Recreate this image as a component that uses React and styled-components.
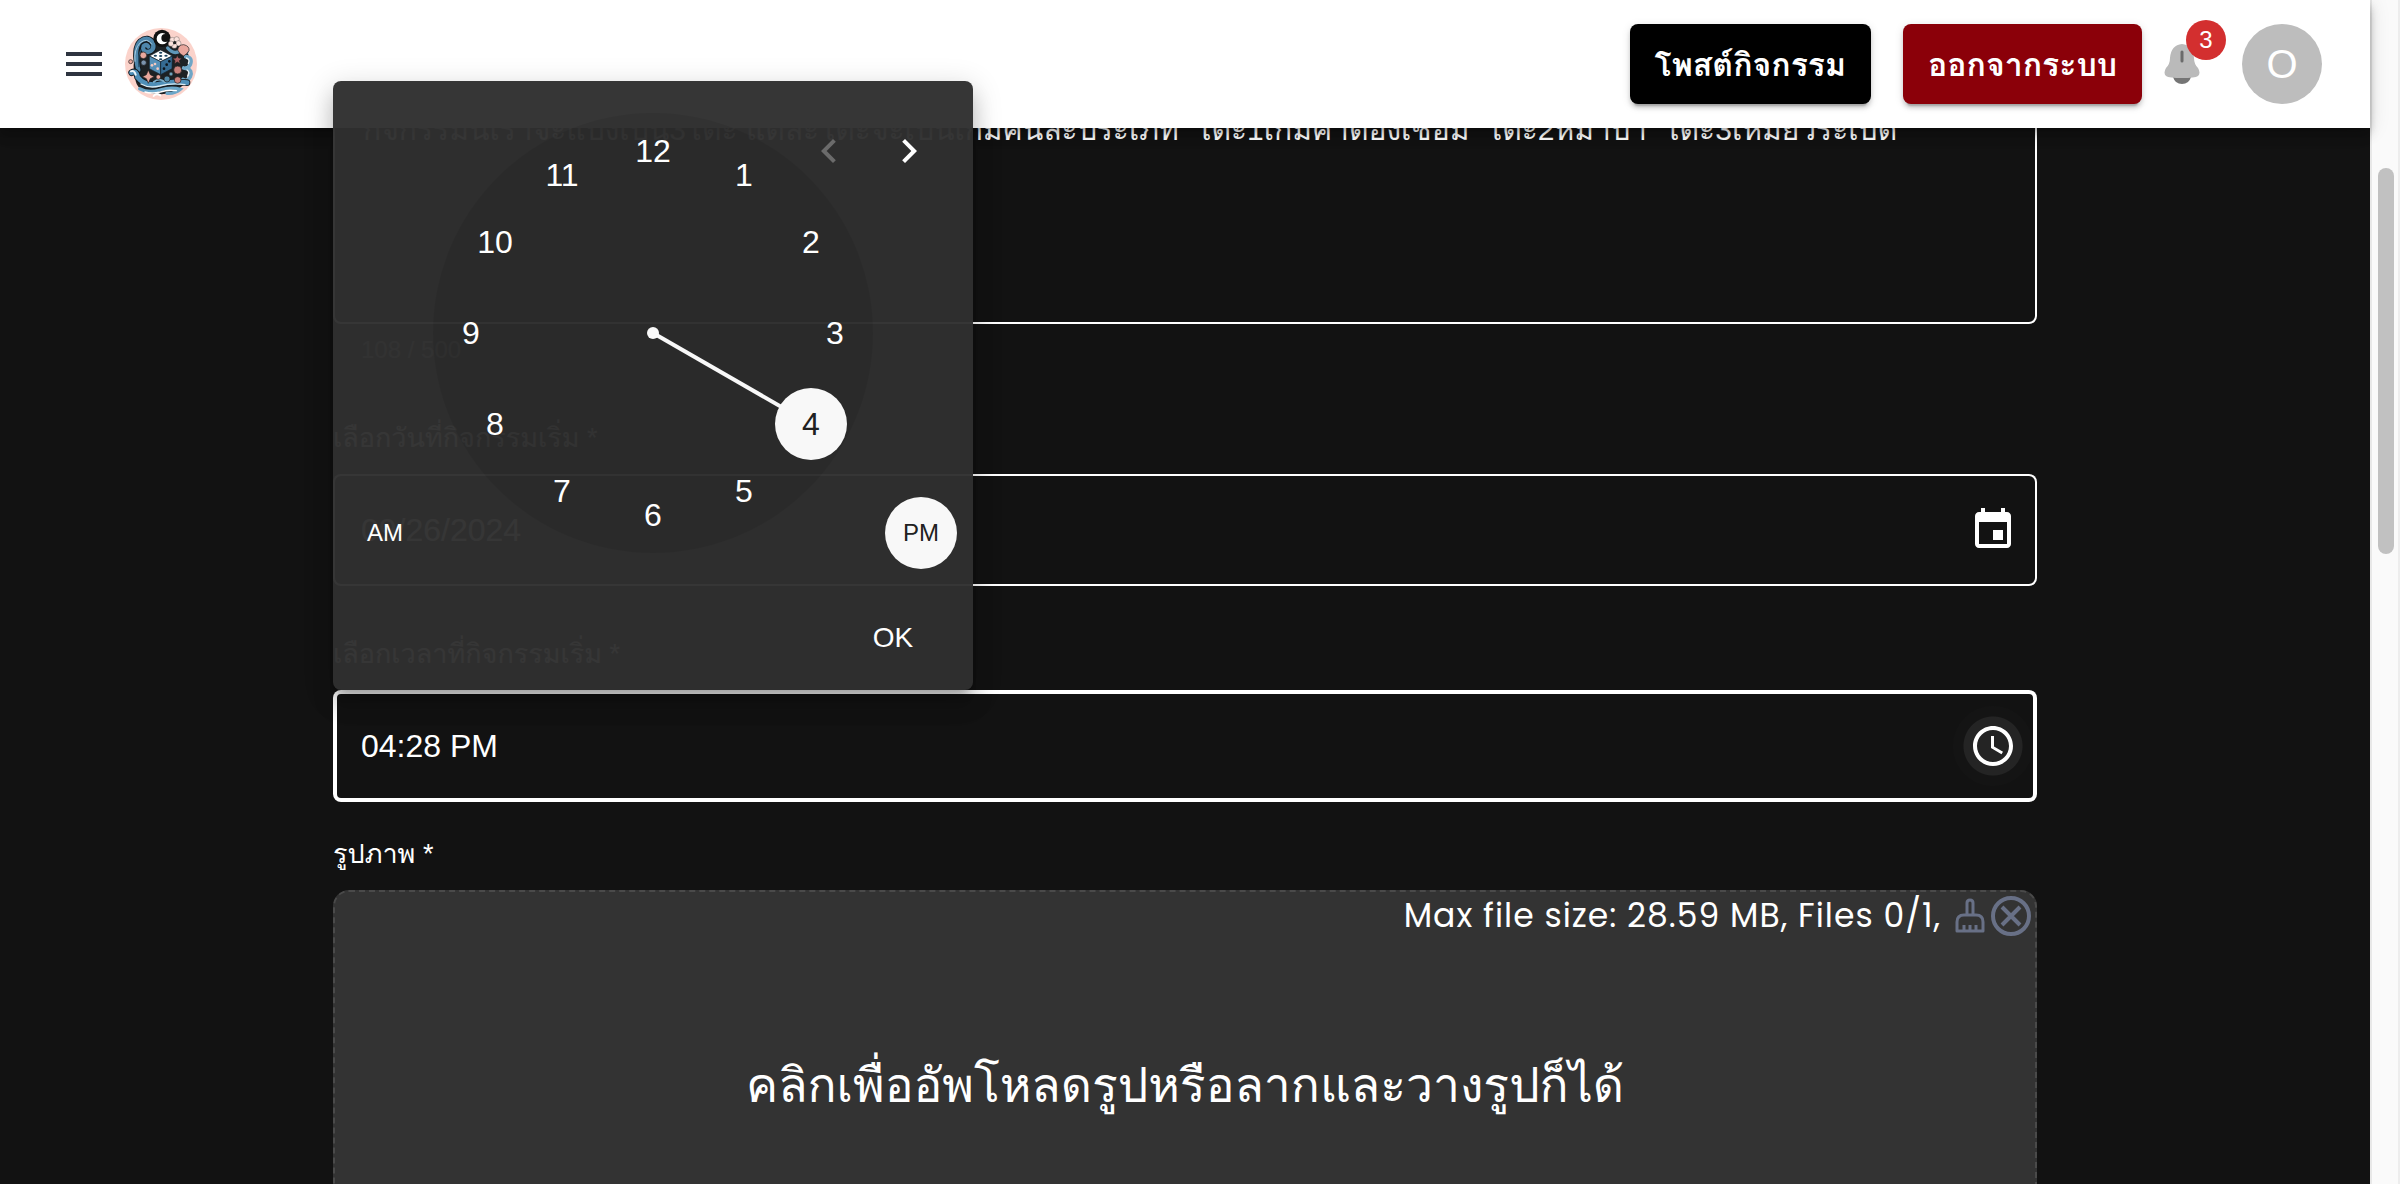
import React from "react";
import styled, { createGlobalStyle, css } from "styled-components";

const GlobalStyle = createGlobalStyle`
  *, *::before, *::after { box-sizing: border-box; }
  body {
    margin: 0;
    background: #121212;
    color: #fff;
    font-family: "Liberation Sans", Arial, Loma, sans-serif;
  }
  button, input, textarea { font: inherit; color: inherit; }
`;

const Screen = styled.div`
  display: flex;
  height: 100vh;
  overflow: hidden;
`;

const Page = styled.div`
  flex: 1;
  min-width: 0;
`;

const AppBar = styled.header`
  position: relative;
  z-index: 10;
  display: flex;
  align-items: center;
  height: 128px;
  padding: 0 48px 0 36px;
  background: #fff;
  box-shadow: 0 4px 8px -2px rgba(0, 0, 0, 0.2), 0 8px 10px rgba(0, 0, 0, 0.14),
    0 2px 20px rgba(0, 0, 0, 0.12);
`;

const IconButton = styled.button`
  display: inline-flex;
  align-items: center;
  justify-content: center;
  flex: none;
  padding: ${(p) => (p.$roomy ? 24 : 16)}px;
  border: 0;
  border-radius: 50%;
  background: none;
  color: ${(p) => p.$color || "#fff"};
  ${(p) =>
    p.$active &&
    css`
      background: radial-gradient(circle, #242424 0 29px, #141414 30px 40px);
    `}
`;

const LogoLink = styled.a`
  display: block;
  width: 72px;
  height: 72px;
  margin-left: -7px;
`;

const Actions = styled.div`
  display: flex;
  align-items: center;
  margin-left: auto;
`;

const BarButton = styled.button`
  height: 80px;
  padding: 0 25px;
  margin-right: ${(p) => p.$gap}px;
  border: 0;
  border-radius: 8px;
  background: ${(p) => p.$bg};
  font-size: 32px;
  font-weight: 700;
  white-space: nowrap;
  box-shadow: 0 6px 2px -4px rgba(0, 0, 0, 0.2), 0 4px 4px rgba(0, 0, 0, 0.14),
    0 2px 10px rgba(0, 0, 0, 0.12);
`;

const BellButton = styled.button`
  position: relative;
  display: flex;
  padding: 0;
  margin-right: 42px;
  border: 0;
  background: none;
`;

const Badge = styled.span`
  position: absolute;
  top: -24px;
  right: -26px;
  width: 40px;
  height: 40px;
  border-radius: 50%;
  background: #d32f2f;
  font-size: 24px;
  line-height: 40px;
  text-align: center;
`;

const Avatar = styled.div`
  display: flex;
  align-items: center;
  justify-content: center;
  width: 80px;
  height: 80px;
  border-radius: 50%;
  background: #bdbdbd;
  font-size: 40px;
`;

const Form = styled.form`
  display: flex;
  flex-direction: column;
  max-width: 1704px;
  margin: -56px auto 0;
`;

const Field = styled.div`
  position: relative;
  display: flex;
  flex-direction: column;
  margin-bottom: ${(p) => (p.$tight ? 32 : 48)}px;
`;

const Label = styled.label`
  margin-bottom: 16px;
  font-size: 27px;
  line-height: 40px;
`;

const Description = styled.textarea`
  height: 252px;
  padding: 33px 28px;
  border: 2px solid #fff;
  border-radius: 8px;
  background: none;
  font-size: 30px;
  line-height: 46px;
  resize: none;
  outline: 0;
  overflow: hidden;
`;

const HelperText = styled.p`
  margin: 6px 28px 0;
  color: rgba(255, 255, 255, 0.5);
  font-size: 24px;
  line-height: 40px;
`;

const InputBox = styled.div`
  position: relative;
  display: flex;
  align-items: center;
  height: 112px;
  padding: 0 4px 0 28px;
  border-radius: 8px;
  box-shadow: inset 0 0 0 ${(p) => (p.$focused ? 4 : 2)}px #fff;
`;

const TextInput = styled.input`
  flex: 1;
  min-width: 0;
  padding: 0;
  border: 0;
  outline: 0;
  background: none;
  font-size: 32px;
  line-height: 46px;
`;

const Popup = styled.div`
  position: absolute;
  z-index: 20;
  bottom: 112px;
  left: 0;
  display: flex;
  flex-direction: column;
  width: 640px;
  padding: 32px 16px 16px;
  border-radius: 8px;
  background: rgba(47, 47, 47, 0.97);
  box-shadow: 0 10px 10px -6px rgba(0, 0, 0, 0.2),
    0 16px 20px 2px rgba(0, 0, 0, 0.14), 0 6px 28px 4px rgba(0, 0, 0, 0.12);
`;

const Arrows = styled.div`
  position: absolute;
  z-index: 1;
  top: 30px;
  right: 24px;
  display: flex;
`;

const Dial = styled.div`
  position: relative;
  align-self: center;
  width: 440px;
  height: 440px;
  border-radius: 50%;
  background: rgba(0, 0, 0, 0.07);
`;

const Hand = styled.svg`
  display: block;
`;

const Hour = styled.span`
  position: absolute;
  top: 184px;
  left: 184px;
  width: 72px;
  height: 72px;
  border-radius: 50%;
  color: ${(p) => (p.$selected ? "#212121" : "#fff")};
  font-size: 32px;
  line-height: 72px;
  text-align: center;
`;

const MeridiemRow = styled.div`
  position: relative;
  display: flex;
  justify-content: space-between;
  margin-top: -56px;
`;

const Meridiem = styled.button`
  width: 72px;
  height: 72px;
  padding: 0;
  border: 0;
  border-radius: 50%;
  background: ${(p) => (p.$selected ? "#f8f8f8" : "transparent")};
  color: ${(p) => (p.$selected ? "#212121" : "#fff")};
  font-size: 24px;
`;

const OkButton = styled.button`
  align-self: flex-end;
  width: 128px;
  height: 72px;
  margin-top: 33px;
  padding: 0;
  border: 0;
  background: none;
  font-size: 28px;
`;

const DropZone = styled.div`
  display: flex;
  flex-direction: column;
  height: 400px;
  border: 2px dashed #4a4a4a;
  border-radius: 16px;
  background: #333;
`;

const DropHeader = styled.div`
  display: flex;
  align-items: center;
  justify-content: flex-end;
  height: 48px;
  padding-right: 4px;
  font-family: Poppins, "Noto Sans", sans-serif;
  font-size: 33px;
  font-weight: 400;
  letter-spacing: 1px;
`;

const DropIcons = styled.span`
  display: flex;
  align-items: center;
  gap: 6px;
  margin-left: 14px;
`;

const DropButton = styled.button`
  display: flex;
  padding: 0;
  border: 0;
  background: none;
`;

const DropText = styled.p`
  margin: 110px 0 0;
  font-size: 48px;
  line-height: 72px;
  text-align: center;
`;

const ScrollTrack = styled.div`
  flex: none;
  width: 30px;
  padding: 168px 4px 0 6px;
  border-left: 2px solid #e8e8e8;
  border-right: 2px solid #ededed;
  background: #fafafa;
`;

const ScrollThumb = styled.div`
  width: 16px;
  height: 386px;
  border-radius: 8px;
  background: #c1c1c1;
`;

function Icon({ d, size = 48 }) {
  return (
    <svg width={size} height={size} viewBox="0 0 24 24" fill="currentColor" aria-hidden="true">
      <path d={d} />
    </svg>
  );
}

const icons = {
  menu: "M3 18h18v-2H3v2zm0-5h18v-2H3v2zm0-7v2h18V6H3z",
  left: "M15.41 16.59L10.83 12l4.58-4.59L14 6l-6 6 6 6 1.41-1.41z",
  right: "M8.59 16.59L13.17 12 8.59 7.41 10 6l6 6-6 6-1.41-1.41z",
  event:
    "M17 12h-5v5h5v-5zM16 1v2H8V1H6v2H5c-1.11 0-1.99.9-1.99 2L3 19c0 1.1.89 2 2 2h14c1.1 0 2-.9 2-2V5c0-1.1-.9-2-2-2h-1V1h-2zm3 18H5V8h14v11z",
  clock:
    "M11.99 2C6.47 2 2 6.48 2 12s4.47 10 9.99 10C17.52 22 22 17.52 22 12S17.52 2 11.99 2zM12 20c-4.42 0-8-3.58-8-8s3.58-8 8-8 8 3.58 8 8-3.58 8-8 8zM12.5 7H11v6l5.25 3.15.75-1.23-4.5-2.67z",
};

function Logo() {
  return (
    <svg width="72" height="72" viewBox="0 0 216 216" aria-hidden="true">
      <circle cx="108" cy="108" r="108" fill="#fbd3cb" />
      <path
        d="M88 44 Q60 30 44 46 Q24 68 28 100 Q22 120 32 140 Q28 160 40 176 Q60 196 100 198 Q144 202 174 172 Q194 146 188 112 Q200 84 180 64 Q164 46 140 48 Q118 50 88 44Z"
        fill="#1d2124"
      />
      <g fill="none" strokeLinecap="round">
        <path d="M40 126 Q24 62 46 40 Q70 22 84 46 Q90 68 68 72 Q50 70 56 54 Q64 46 70 56" stroke="#11171c" strokeWidth="18" />
        <path d="M40 126 Q24 62 46 40 Q70 22 84 46 Q90 68 68 72 Q50 70 56 54 Q64 46 70 56" stroke="#4e86ab" strokeWidth="13" />
        <path d="M30 100 Q26 64 46 44 Q66 28 80 48" stroke="#a9cbdf" strokeWidth="3" />
        <path d="M42 116 Q38 80 48 66" stroke="#234d6c" strokeWidth="4" />
        <path d="M128 60 Q146 82 166 68 Q180 56 186 72" stroke="#5f97b9" strokeWidth="10" />
        <path d="M182 86 Q204 88 196 110 Q188 124 176 120 M184 120 Q204 126 196 146 Q188 162 174 154" stroke="#6fa6c6" strokeWidth="11" />
        <path d="M184 90 Q196 94 190 106 M186 126 Q196 132 188 144" stroke="#e9f3f8" strokeWidth="4" />
        <path d="M20 134 Q34 126 38 148 Q58 174 96 170 Q136 158 186 164" stroke="#11171c" strokeWidth="20" />
        <path d="M20 134 Q34 126 38 148 Q58 174 96 170 Q136 158 186 164" stroke="#4f8fb8" strokeWidth="15" />
        <path d="M18 130 Q28 126 32 140" stroke="#eef6fa" strokeWidth="6" />
        <path d="M48 168 Q72 182 104 174 Q140 164 180 170" stroke="#dcecf4" strokeWidth="4" />
        <path d="M44 182 Q70 196 104 186 Q140 176 166 184 Q150 198 126 196" stroke="#6ba6c8" strokeWidth="10" />
        <path d="M60 192 Q80 198 106 192 Q130 184 154 188" stroke="#fff" strokeWidth="4" />
        <path d="M86 204 Q94 194 106 202" stroke="#fff" strokeWidth="6" />
        <path d="M86 162 Q102 148 120 162" stroke="#7fb1cc" strokeWidth="5" />
      </g>
      <circle cx="111" cy="31" r="26" fill="#111" />
      <circle cx="112" cy="32" r="17" fill="#fff" />
      <circle cx="121" cy="30" r="12" fill="#111" />
      <g fill="#e9a79d" stroke="#1c1c1e" strokeWidth="2">
        <path d="M158 66 Q160 50 176 50 Q194 54 192 68 Q186 78 176 84 Q164 80 158 66Z" />
        <circle cx="55" cy="82" r="10" />
        <circle cx="56" cy="104" r="8" fill="#7b93ad" />
        <circle cx="158" cy="126" r="12" fill="#c9827d" />
        <circle cx="158" cy="156" r="10" fill="#c9827d" />
        <circle cx="100" cy="147" r="7" />
        <circle cx="126" cy="153" r="9" fill="#5289a8" />
        <circle cx="138" cy="138" r="6" fill="#6fa3bd" />
        <path d="M70 126 L76 140 L88 146 L76 152 L70 166 L64 152 L52 146 L64 140Z" />
        <path d="M157 82 L161 90 L171 91 L163 98 L166 108 L157 102 L148 108 L150 98 L143 91 L153 90Z" fill="#a95f62" />
        <circle cx="17" cy="101" r="6" />
      </g>
      <g fill="#fbe2dc" stroke="#333" strokeWidth="1">
        <circle cx="142" cy="36" r="8" />
        <circle cx="155" cy="34" r="8" />
        <circle cx="160" cy="46" r="8" />
        <circle cx="148" cy="53" r="8" />
        <circle cx="138" cy="47" r="8" />
      </g>
      <circle cx="149" cy="44" r="5" fill="#222" />
      <path d="M107 66 L142 84 L107 101 L73 84Z" fill="#fff" stroke="#14202a" strokeWidth="2" />
      <path d="M73 84 L107 101 V140 L73 122Z" fill="#5590b8" stroke="#14202a" strokeWidth="2" />
      <path d="M142 84 L107 101 V140 L141 122Z" fill="#356b93" stroke="#14202a" strokeWidth="2" />
      <g fill="#1d435f">
        <ellipse cx="107" cy="74" rx="5" ry="3" />
        <ellipse cx="91" cy="83" rx="5" ry="3" />
        <ellipse cx="107" cy="84" rx="5" ry="3" />
        <ellipse cx="123" cy="83" rx="5" ry="3" />
        <ellipse cx="107" cy="94" rx="5" ry="3" />
      </g>
      <g fill="#f4c9c0">
        <circle cx="81" cy="112" r="4" />
        <circle cx="90" cy="108" r="4" />
        <circle cx="98" cy="122" r="4" />
      </g>
      <g fill="#0d151c">
        <circle cx="133" cy="100" r="4" />
        <circle cx="125" cy="110" r="4" />
        <circle cx="117" cy="122" r="4" />
      </g>
    </svg>
  );
}

function Bell() {
  return (
    <svg width="36" height="40" viewBox="0 0 36 40" aria-hidden="true">
      <path d="M9 33 H27 Q25 40 18 40 Q11 40 9 33Z" fill="#757575" />
      <path
        d="M18 0 Q29 1 30 14 Q30 20 34 24 Q37 29 34 32 Q31 34 18 34 Q5 34 2 32 Q-1 29 2 24 Q6 20 6 14 Q7 1 18 0Z"
        fill="#bababa"
      />
      <path d="M18 8V17" stroke="#6b6b6b" strokeWidth="3" strokeLinecap="round" />
    </svg>
  );
}

function Broom() {
  return (
    <svg width="30" height="36" viewBox="0 0 30 36" fill="none" stroke="#687086" strokeWidth="3" strokeLinejoin="round" aria-hidden="true">
      <path d="M12 17 V5 Q12 2 15 2 Q18 2 18 5 V17" />
      <path d="M2 33 V24 Q2 17 9 17 H21 Q28 17 28 24 V33Z" />
      <path d="M9 33V27M15 33V27M21 33V27" />
    </svg>
  );
}

function CloseCircle() {
  return (
    <svg width="40" height="40" viewBox="0 0 40 40" fill="none" stroke="#687086" strokeWidth="4" aria-hidden="true">
      <circle cx="20" cy="20" r="18" />
      <path d="M11 11L29 29M29 11L11 29" />
    </svg>
  );
}

const RADIUS = 182;
const HOURS = [1, 2, 3, 4, 5, 6, 7, 8, 9, 10, 11, 12];

function point(hour) {
  const angle = (hour * Math.PI) / 6;
  return [Math.round(Math.sin(angle) * RADIUS), Math.round(-Math.cos(angle) * RADIUS)];
}

function TimePopup({ hour }) {
  const [hx, hy] = point(hour);
  return (
    <Popup role="dialog" aria-label="Time">
      <Arrows>
        <IconButton type="button" aria-label="Previous view" disabled $color="#6b6b6b">
          <Icon d={icons.left} />
        </IconButton>
        <IconButton type="button" aria-label="Next view">
          <Icon d={icons.right} />
        </IconButton>
      </Arrows>
      <Dial role="listbox" aria-label="Hours">
        <Hand width="440" height="440" viewBox="-220 -220 440 440" aria-hidden="true">
          <line x2={hx} y2={hy} stroke="#f8f8f8" strokeWidth="4" />
          <circle r="6" fill="#f8f8f8" />
          <circle cx={hx} cy={hy} r="36" fill="#f8f8f8" />
        </Hand>
        {HOURS.map((h) => {
          const [x, y] = point(h);
          return (
            <Hour
              key={h}
              role="option"
              aria-selected={h === hour}
              $selected={h === hour}
              style={{ transform: `translate(${x}px, ${y}px)` }}
            >
              {h}
            </Hour>
          );
        })}
      </Dial>
      <MeridiemRow>
        <Meridiem type="button">AM</Meridiem>
        <Meridiem type="button" $selected>
          PM
        </Meridiem>
      </MeridiemRow>
      <OkButton type="button">OK</OkButton>
    </Popup>
  );
}

export default function App() {
  return (
    <>
      <GlobalStyle />
      <Screen>
        <Page>
          <AppBar>
            <IconButton type="button" aria-label="Menu" $roomy $color="#2e3440">
              <Icon d={icons.menu} />
            </IconButton>
            <LogoLink href="#" aria-label="Home">
              <Logo />
            </LogoLink>
            <Actions>
              <BarButton type="button" $bg="#000" $gap={32}>
                โพสต์กิจกรรม
              </BarButton>
              <BarButton type="button" $bg="#8b0009" $gap={22}>
                ออกจากระบบ
              </BarButton>
              <BellButton type="button" aria-label="Notifications">
                <Bell />
                <Badge>3</Badge>
              </BellButton>
              <Avatar>O</Avatar>
            </Actions>
          </AppBar>
          <Form>
            <Field>
              <Description
                aria-label="Description"
                defaultValue="กิจกรรมนี้เราจะแบ่งเป็น3โต๊ะ แต่ละโต๊ะจะเป็นเกมคนละประเภท  โต๊ะ1เกมคำต้องเชื่อม  โต๊ะ2หมาป่า  โต๊ะ3เหมียวระเบิด"
              />
              <HelperText>108 / 500</HelperText>
            </Field>
            <Field>
              <Label htmlFor="date">เลือกวันที่กิจกรรมเริ่ม *</Label>
              <InputBox>
                <TextInput id="date" defaultValue="09/26/2024" />
                <IconButton type="button" aria-label="Choose date">
                  <Icon d={icons.event} />
                </IconButton>
              </InputBox>
            </Field>
            <Field $tight>
              <Label htmlFor="time">เลือกเวลาที่กิจกรรมเริ่ม *</Label>
              <InputBox $focused>
                <TextInput id="time" defaultValue="04:28 PM" />
                <IconButton type="button" aria-label="Choose time" $active>
                  <Icon d={icons.clock} />
                </IconButton>
              </InputBox>
              <TimePopup hour={4} />
            </Field>
            <Field>
              <Label as="span">รูปภาพ *</Label>
              <DropZone>
                <DropHeader>
                  <span>Max file size: 28.59 MB, Files 0/1,</span>
                  <DropIcons>
                    <DropButton type="button" aria-label="Clean">
                      <Broom />
                    </DropButton>
                    <DropButton type="button" aria-label="Clear">
                      <CloseCircle />
                    </DropButton>
                  </DropIcons>
                </DropHeader>
                <DropText>คลิกเพื่ออัพโหลดรูปหรือลากและวางรูปก็ได้</DropText>
              </DropZone>
            </Field>
          </Form>
        </Page>
        <ScrollTrack aria-hidden="true">
          <ScrollThumb />
        </ScrollTrack>
      </Screen>
    </>
  );
}
